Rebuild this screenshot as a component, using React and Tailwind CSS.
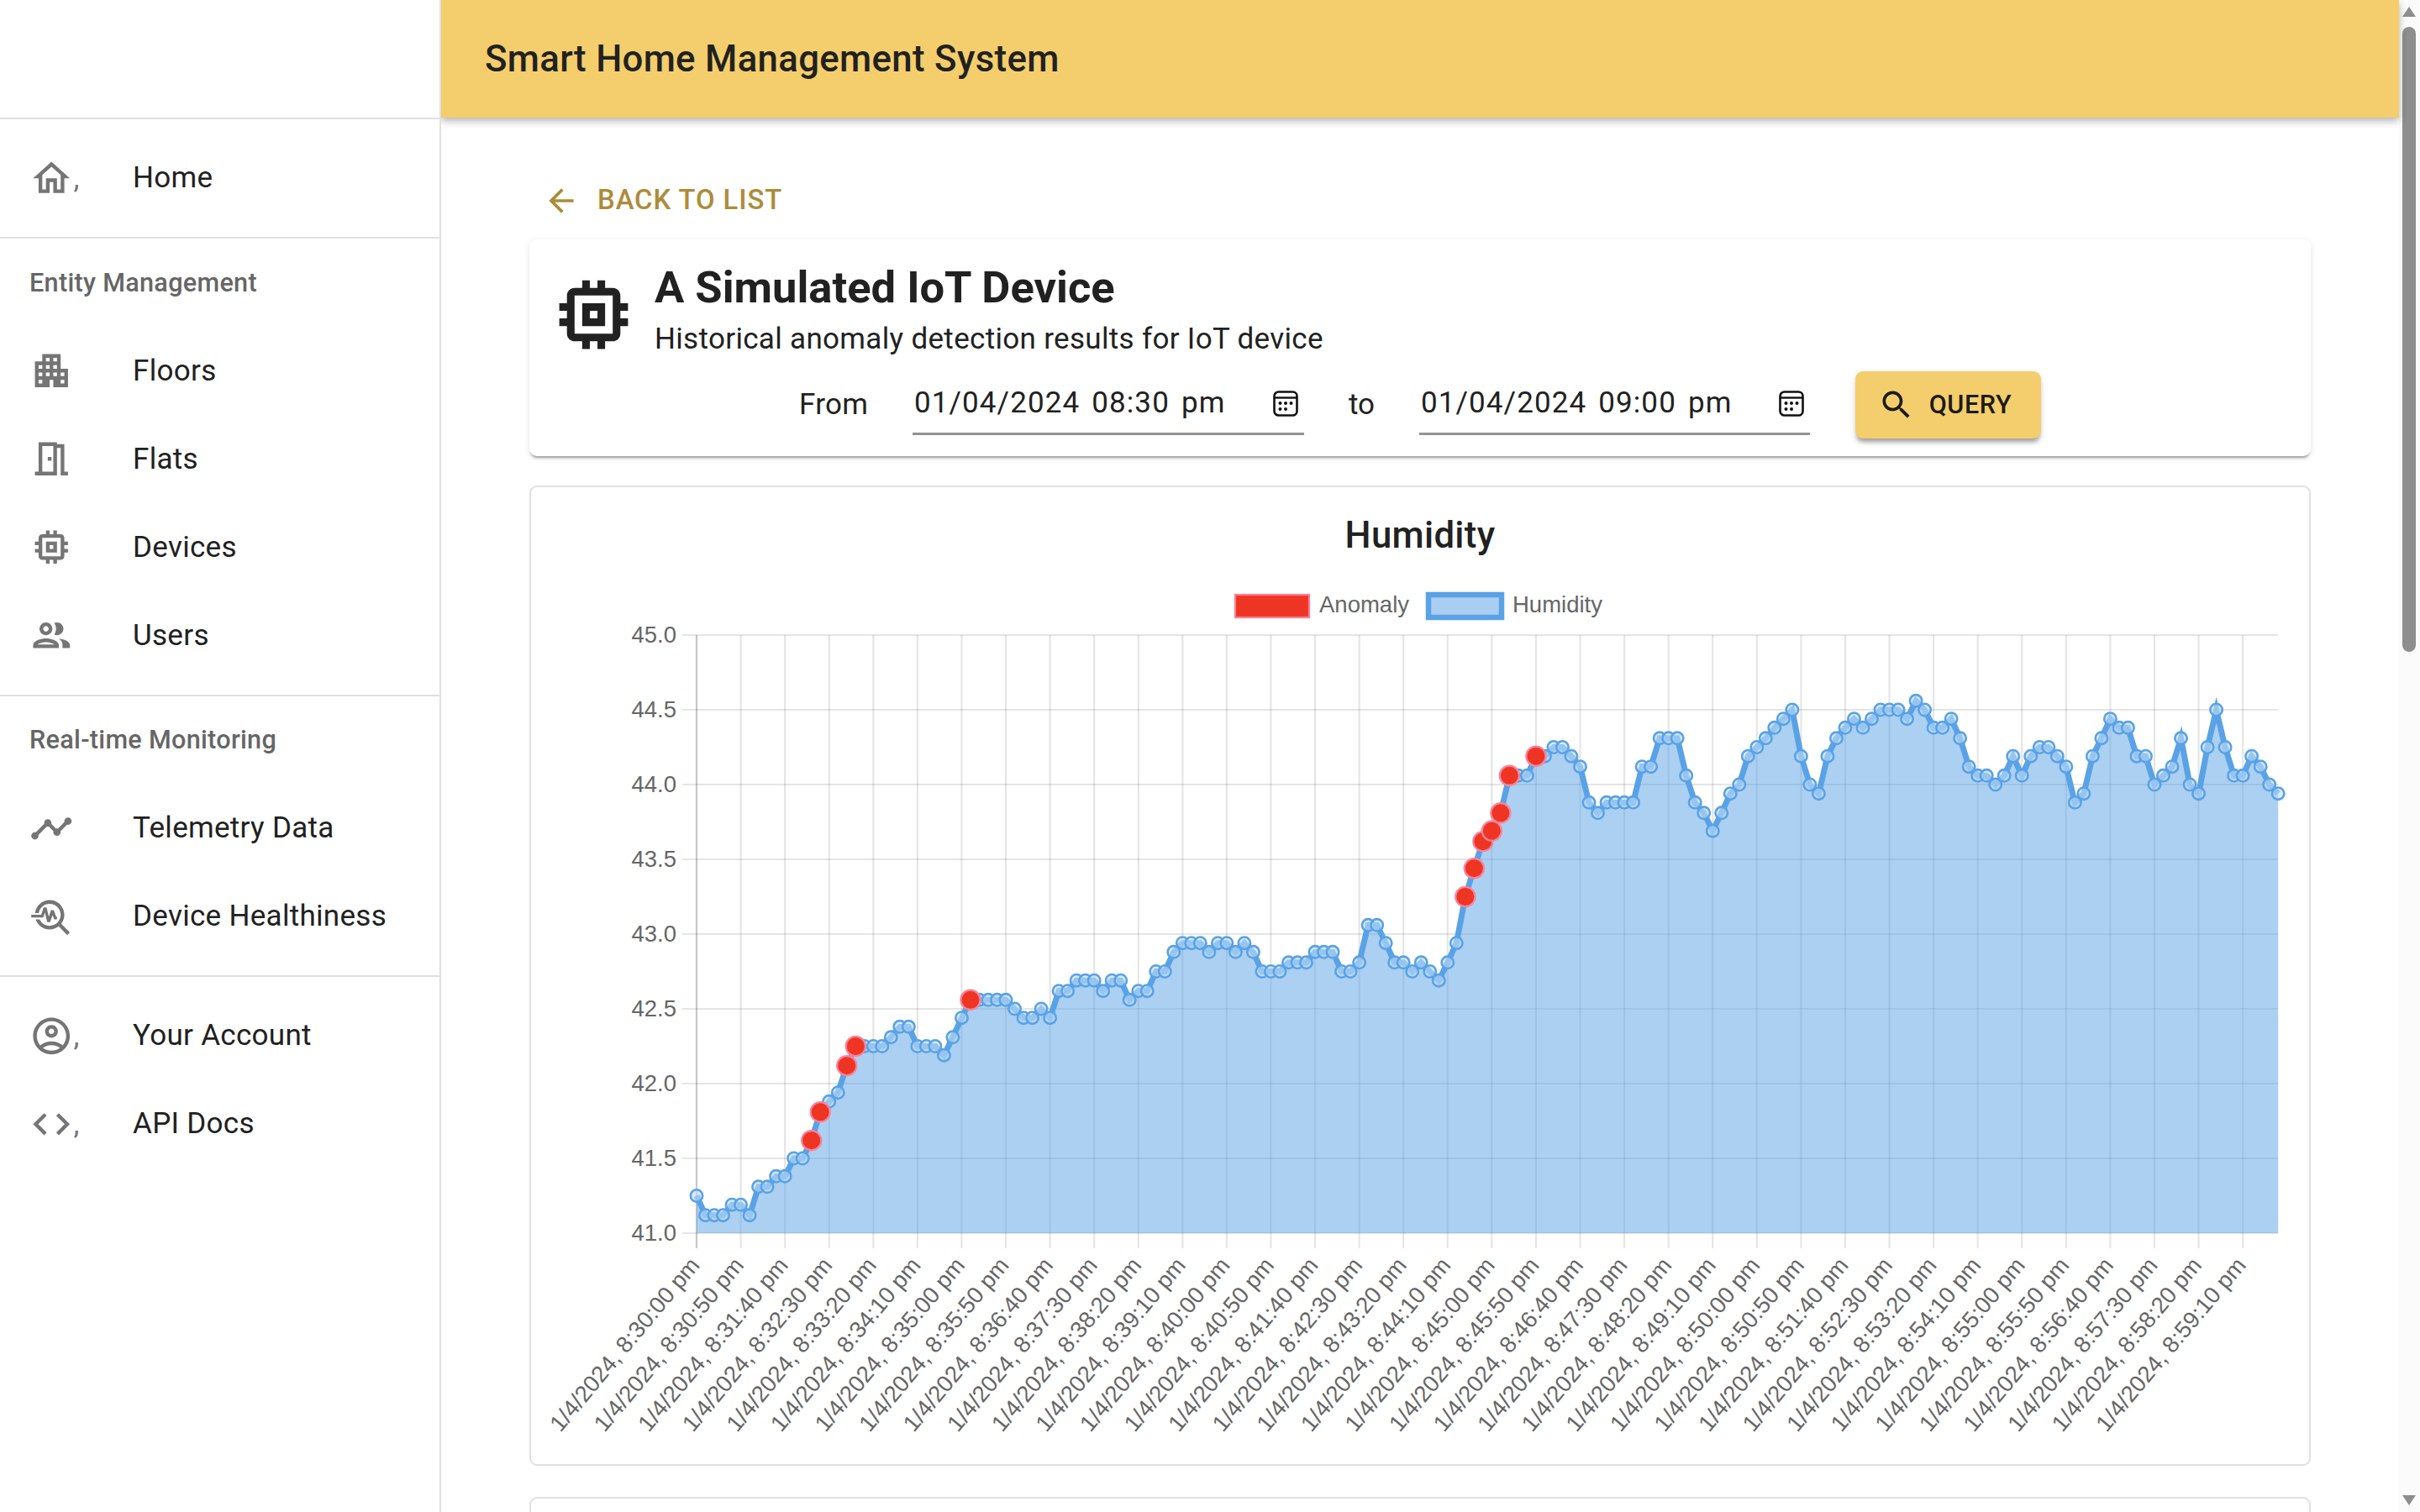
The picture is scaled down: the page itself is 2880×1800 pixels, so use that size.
import React from 'react'

const ICONS = {
  home: 'M12 5.69l5 4.5V18h-2v-6H9v6H7v-7.81l5-4.5M12 3L2 12h3v8h6v-6h2v6h6v-8h3L12 3z',
  floors:
    'M17 11V3H7v4H3v14h8v-4h2v4h8V11h-4zM7 19H5v-2h2v2zm0-4H5v-2h2v2zm0-4H5V9h2v2zm4 4H9v-2h2v2zm0-4H9V9h2v2zm0-4H9V5h2v2zm4 8h-2v-2h2v2zm0-4h-2V9h2v2zm0-4h-2V5h2v2zm4 12h-2v-2h2v2zm0-4h-2v-2h2v2z',
  flats: 'M19 19V4h-4V3H5v16H3v2h12V6h2v15h4v-2h-2zm-6 0H7V5h6v14zm-3-8h2v2h-2z',
  memory:
    'M15 9H9v6h6V9zm-2 4h-2v-2h2v2zm8-2V9h-2V7c0-1.1-.9-2-2-2h-2V3h-2v2h-2V3H9v2H7c-1.1 0-2 .9-2 2v2H3v2h2v2H3v2h2v2c0 1.1.9 2 2 2h2v2h2v-2h2v2h2v-2h2c1.1 0 2-.9 2-2v-2h2v-2h-2v-2h2zm-4 6H7V7h10v10z',
  users:
    'M9 13.75c-2.34 0-7 1.17-7 3.5V19h14v-1.75c0-2.33-4.66-3.5-7-3.5zM4.34 17c.84-.58 2.87-1.25 4.66-1.25s3.82.67 4.66 1.25H4.34zM9 12c1.93 0 3.5-1.57 3.5-3.5S10.93 5 9 5 5.5 6.57 5.5 8.5 7.07 12 9 12zm0-5c.83 0 1.5.67 1.5 1.5S9.83 10 9 10s-1.5-.67-1.5-1.5S8.17 7 9 7zm7.04 6.81c1.16.84 1.96 1.96 1.96 3.44V19h4v-1.75c0-2.02-3.5-3.17-5.96-3.44zM15 12c1.93 0 3.5-1.57 3.5-3.5S16.93 5 15 5c-.54 0-1.04.13-1.5.35.63.89 1 1.98 1 3.15s-.37 2.26-1 3.15c.46.22.96.35 1.5.35z',
  timeline:
    'M23 8c0 1.1-.9 2-2 2-.18 0-.35-.02-.51-.07l-3.56 3.55c.05.16.07.34.07.52 0 1.1-.9 2-2 2s-2-.9-2-2c0-.18.02-.36.07-.52l-2.55-2.55c-.16.05-.34.07-.52.07s-.36-.02-.52-.07l-4.55 4.56c.05.16.07.33.07.51 0 1.1-.9 2-2 2s-2-.9-2-2 .9-2 2-2c.18 0 .35.02.51.07l4.56-4.55C8.02 9.36 8 9.18 8 9c0-1.1.9-2 2-2s2 .9 2 2c0 .18-.02.36-.07.52l2.55 2.55c.16-.05.34-.07.52-.07s.36.02.52.07l3.55-3.56C19.02 8.35 19 8.18 19 8c0-1.1.9-2 2-2s2 .9 2 2z',
  health:
    'M22 20.59l-4.69-4.69C18.37 14.55 19 12.85 19 11c0-4.42-3.58-8-8-8-4.08 0-7.44 3.05-7.93 7h2.02C5.57 7.17 8.03 5 11 5c3.31 0 6 2.69 6 6s-2.69 6-6 6c-2.42 0-4.5-1.44-5.45-3.5H3.4C4.45 16.69 7.46 19 11 19c1.85 0 3.55-.63 4.9-1.69L20.59 22 22 20.59zM8.43 9.69L9.65 15h1.64l1.26-3.78.95 2.28h1.5v-1.5h-.5l-1.25-3.5h-1.5l-1.2 3.53L9.35 7H7.7l-1.25 4H1v1.5h6.55l.88-2.81z',
  account:
    'M12 2C6.48 2 2 6.48 2 12s4.48 10 10 10 10-4.48 10-10S17.52 2 12 2zM7.35 18.5C8.66 17.56 10.26 17 12 17s3.34.56 4.65 1.5c-1.31.94-2.91 1.5-4.65 1.5s-3.34-.56-4.65-1.5zm10.79-1.38C16.45 15.8 14.32 15 12 15s-4.45.8-6.14 2.12C4.7 15.73 4 13.95 4 12c0-4.42 3.58-8 8-8s8 3.58 8 8c0 1.95-.7 3.73-1.86 5.12zM12 6c-1.93 0-3.5 1.57-3.5 3.5S10.07 13 12 13s3.5-1.57 3.5-3.5S13.93 6 12 6zm0 5c-.83 0-1.5-.67-1.5-1.5S11.17 8 12 8s1.5.67 1.5 1.5S12.83 11 12 11z',
  code: 'M9.4 16.6L4.8 12l4.6-4.6L8 6l-6 6 6 6 1.4-1.4zm5.2 0l4.6-4.6-4.6-4.6L16 6l6 6-6 6-1.4-1.4z',
  back: 'M20 11H7.83l5.59-5.59L12 4l-8 8 8 8 1.41-1.41L7.83 13H20v-2z',
  search:
    'M15.5 14h-.79l-.28-.27C15.41 12.59 16 11.11 16 9.5 16 5.91 13.09 3 9.5 3S3 5.91 3 9.5 5.91 16 9.5 16c1.61 0 3.09-.59 4.23-1.57l.27.28v.79l5 4.99L20.49 19l-4.99-5zm-6 0C7.01 14 5 11.99 5 9.5S7.01 5 9.5 5 14 7.01 14 9.5 11.99 14 9.5 14z'
}

const HUMIDITY = [
  41.25, 41.12, 41.12, 41.12, 41.19, 41.19, 41.12, 41.31, 41.31, 41.38, 41.38, 41.5, 41.5, 41.62, 41.81, 41.88, 41.94,
  42.12, 42.25, 42.25, 42.25, 42.25, 42.31, 42.38, 42.38, 42.25, 42.25, 42.25, 42.19, 42.31, 42.44, 42.56, 42.56, 42.56,
  42.56, 42.56, 42.5, 42.44, 42.44, 42.5, 42.44, 42.62, 42.62, 42.69, 42.69, 42.69, 42.62, 42.69, 42.69, 42.56, 42.62,
  42.62, 42.75, 42.75, 42.88, 42.94, 42.94, 42.94, 42.88, 42.94, 42.94, 42.88, 42.94, 42.88, 42.75, 42.75, 42.75, 42.81,
  42.81, 42.81, 42.88, 42.88, 42.88, 42.75, 42.75, 42.81, 43.06, 43.06, 42.94, 42.81, 42.81, 42.75, 42.81, 42.75, 42.69,
  42.81, 42.94, 43.25, 43.44, 43.62, 43.69, 43.81, 44.06, 44.06, 44.06, 44.19, 44.19, 44.25, 44.25, 44.19, 44.12, 43.88,
  43.81, 43.88, 43.88, 43.88, 43.88, 44.12, 44.12, 44.31, 44.31, 44.31, 44.06, 43.88, 43.81, 43.69, 43.81, 43.94, 44.0,
  44.19, 44.25, 44.31, 44.38, 44.44, 44.5, 44.19, 44.0, 43.94, 44.19, 44.31, 44.38, 44.44, 44.38, 44.44, 44.5, 44.5,
  44.5, 44.44, 44.56, 44.5, 44.38, 44.38, 44.44, 44.31, 44.12, 44.06, 44.06, 44.0, 44.06, 44.19, 44.06, 44.19, 44.25,
  44.25, 44.19, 44.12, 43.88, 43.94, 44.19, 44.31, 44.44, 44.38, 44.38, 44.19, 44.19, 44.0, 44.06, 44.12, 44.31, 44.0,
  43.94, 44.25, 44.5, 44.25, 44.06, 44.06, 44.19, 44.12, 44.0, 43.94
]
const ANOMALIES = [13, 14, 17, 18, 31, 87, 88, 89, 90, 91, 92, 95]

const chartX = (i) => 829 + i * 10.515
const chartY = (v) => 1468 - (v - 41) * 178

function tickLabel(i) {
  const total = 30 * 60 + i * 10
  const m = Math.floor(total / 60)
  const s = total % 60
  return `1/4/2024, 8:${String(m).padStart(2, '0')}:${String(s).padStart(2, '0')} pm`
}

function Icon({ name, className }) {
  return (
    <svg viewBox="0 0 24 24" fill="currentColor" className={className}>
      <path d={ICONS[name]} />
    </svg>
  )
}

function NavItem({ icon, label, comma }) {
  return (
    <div className="flex h-[105px] items-center pl-[35px]">
      <div className="flex w-[123px] shrink-0 items-center text-[#757575]">
        <Icon name={icon} className="h-[52.5px] w-[52.5px] shrink-0" />
        {comma && <span className="text-[35px] leading-none">,</span>}
      </div>
      <span className="pt-[1px] text-[35px] tracking-[0.3px] text-[#212121]">{label}</span>
    </div>
  )
}

function SubHeader({ children }) {
  return (
    <div className="flex h-[105px] items-center pl-[35px] text-[30.6px] font-medium tracking-[0.3px] text-[#666666]">
      {children}
    </div>
  )
}

function Sidebar() {
  return (
    <aside className="relative z-20 h-full w-[525px] shrink-0 border-r-2 border-[#e0e0e0] bg-white">
      <div className="h-[142px] border-b-2 border-[#e0e0e0]" />
      <div className="border-b-2 border-[#e0e0e0] py-[17.5px]">
        <NavItem icon="home" label="Home" comma />
      </div>
      <div className="border-b-2 border-[#e0e0e0] pb-[17.5px]">
        <SubHeader>Entity Management</SubHeader>
        <NavItem icon="floors" label="Floors" />
        <NavItem icon="flats" label="Flats" />
        <NavItem icon="memory" label="Devices" />
        <NavItem icon="users" label="Users" />
      </div>
      <div className="border-b-2 border-[#e0e0e0] pb-[17.5px]">
        <SubHeader>Real-time Monitoring</SubHeader>
        <NavItem icon="timeline" label="Telemetry Data" />
        <NavItem icon="health" label="Device Healthiness" />
      </div>
      <div className="py-[17.5px]">
        <NavItem icon="account" label="Your Account" comma />
        <NavItem icon="code" label="API Docs" comma />
      </div>
    </aside>
  )
}

function CalendarGlyph() {
  return (
    <svg viewBox="0 0 30 31" className="h-[31px] w-[30px] shrink-0">
      <rect x="1.5" y="1.5" width="27" height="28" rx="5" fill="none" stroke="#111" strokeWidth="2.6" />
      <path d="M1.5 8.5h27" stroke="#111" strokeWidth="2.4" />
      <circle cx="8.5" cy="15" r="2" fill="#111" />
      <circle cx="15" cy="15" r="2" fill="#111" />
      <circle cx="21.5" cy="15" r="2" fill="#111" />
      <circle cx="8.5" cy="22" r="2" fill="#111" />
      <circle cx="15" cy="22" r="2" fill="#111" />
    </svg>
  )
}

function DateField({ date, time, className }) {
  return (
    <div
      className={`flex h-[76px] items-center justify-between self-start border-b-[3px] border-[#949494] pt-[4px] pl-[2px] pr-[7px] ${className}`}
    >
      <span className="flex gap-[14px] text-[35px] tracking-[1.1px] whitespace-nowrap text-[#212121]">
        <span>{date}</span>
        <span>{time}</span>
        <span>pm</span>
      </span>
      <CalendarGlyph />
    </div>
  )
}

function QueryCard() {
  return (
    <section className="mt-[7px] h-[258px] rounded-[9px] bg-white pt-[27px] shadow-[0_4px_3px_-2px_rgba(0,0,0,0.35),0_2px_8px_0_rgba(0,0,0,0.1)]">
      <div className="flex items-center pl-[22px]">
        <Icon name="memory" className="mt-[7px] h-[109px] w-[109px] shrink-0 text-[#212121]" />
        <div className="ml-[18px]">
          <h1 className="h-[60px] text-[52.5px] leading-[60px] font-bold text-[#212121]">A Simulated IoT Device</h1>
          <p className="mt-[7px] h-[50px] text-[35px] leading-[50px] tracking-[0.32px] text-[#212121]">
            Historical anomaly detection results for IoT device
          </p>
        </div>
      </div>
      <div className="mt-[13px] flex h-[80px] items-center justify-center">
        <span className="mr-[135px] w-0 text-[35px] tracking-[0.33px] whitespace-nowrap text-[#212121]">From</span>
        <DateField date="01/04/2024" time="08:30" className="w-[466px]" />
        <span className="w-[137px] text-center text-[35px] text-[#212121]">to</span>
        <DateField date="01/04/2024" time="09:00" className="w-[465px]" />
        <button className="ml-[54px] flex h-[80px] w-[221px] items-center justify-center gap-[17px] rounded-[9px] bg-[#f4ce6c] pr-[8px] text-[30.6px] font-medium tracking-[0.6px] text-[#1c1a12] shadow-[0_6px_5px_-2px_rgba(0,0,0,0.3),0_4px_10px_0_rgba(0,0,0,0.12)]">
          <Icon name="search" className="h-[44px] w-[44px]" />
          QUERY
        </button>
      </div>
    </section>
  )
}

function HumidityChart() {
  const yTicks = [45, 44.5, 44, 43.5, 43, 42.5, 42, 41.5, 41]
  const xTicks = []
  for (let i = 0; i < 180; i += 5) xTicks.push(i)
  const line = HUMIDITY.map((v, i) => `${chartX(i).toFixed(1)},${chartY(v).toFixed(1)}`).join(' ')
  const area = `829,1468 ${line} ${chartX(179).toFixed(1)},1468`

  return (
    <svg viewBox="632 695 2116 1048" className="block h-[1048px] w-[2116px]" fontFamily="'Liberation Sans', Arial, sans-serif">
      {/* legend */}
      <rect x="1470" y="708" width="88" height="27" fill="#ee3524" stroke="#fb7f93" strokeWidth="2.2" />
      <text x="1570" y="729" fontSize="27.5" fill="#666">Anomaly</text>
      <rect x="1700" y="708" width="87" height="27" fill="#aacef2" stroke="#5aa2e6" strokeWidth="6.5" />
      <text x="1800" y="729" fontSize="27.5" fill="#666">Humidity</text>

      {/* grid */}
      {yTicks.map((v) => (
        <g key={v}>
          <line x1="812" x2="2711" y1={chartY(v)} y2={chartY(v)} stroke="rgba(0,0,0,0.1)" strokeWidth="2.2" />
          <text x="805" y={chartY(v) + 9} textAnchor="end" fontSize="27.5" fill="#666">
            {v.toFixed(1)}
          </text>
        </g>
      ))}
      {xTicks.map((i) => (
        <g key={i}>
          <line
            x1={chartX(i)}
            x2={chartX(i)}
            y1="756"
            y2="1486"
            stroke={i === 0 ? 'rgba(0,0,0,0.22)' : 'rgba(0,0,0,0.1)'}
            strokeWidth="2.2"
          />
          <text
            transform={`translate(${chartX(i) + 5} 1507) rotate(-50)`}
            textAnchor="end"
            fontSize="27.5"
            fill="#666"
          >
            {tickLabel(i)}
          </text>
        </g>
      ))}

      {/* series */}
      <polygon points={area} fill="rgba(90,162,230,0.5)" />
      <polyline points={line} fill="none" stroke="#5aa2e6" strokeWidth="7" strokeMiterlimit="10" />
      {HUMIDITY.map((v, i) => (
        <circle key={i} cx={chartX(i)} cy={chartY(v)} r="7.2" fill="rgba(190,220,248,0.6)" stroke="#5aa2e6" strokeWidth="2.6" />
      ))}
      {ANOMALIES.map((i) => (
        <circle key={i} cx={chartX(i)} cy={chartY(HUMIDITY[i])} r="11.6" fill="#ee3524" stroke="#f7839a" strokeWidth="2.2" />
      ))}
    </svg>
  )
}

function ScrollBar() {
  return (
    <div className="flex h-full w-[25px] shrink-0 flex-col items-center bg-[#fbfbfb] pr-[1px] pt-[8px]">
      <div className="h-0 w-0 border-x-[8px] border-b-[12px] border-x-transparent border-b-[#8e8e8e]" />
      <div className="mt-[12px] h-[744px] w-[16px] rounded-full bg-[#8e8e8e]" />
      <div className="mt-auto mb-[8px] h-0 w-0 border-x-[8px] border-t-[12px] border-x-transparent border-t-[#8e8e8e]" />
    </div>
  )
}

export default function App() {
  return (
    <div className="flex h-[1800px] w-[2880px] overflow-hidden bg-white font-['Roboto',sans-serif]">
      <Sidebar />
      <div className="flex h-full min-w-0 flex-1 flex-col">
        <header className="relative z-10 flex h-[140px] shrink-0 items-center bg-[#f4ce6c] pt-[2px] pl-[52px] text-[43.75px] font-medium tracking-[0.33px] text-[#212121] shadow-[0_4px_9px_0_rgba(0,0,0,0.3)]">
          Smart Home Management System
        </header>
        <main className="min-h-0 flex-1 overflow-hidden px-[105px] pt-[58px]">
          <a className="flex h-[80px] items-center pl-[16px] pt-[1px] text-[32.8px] font-medium tracking-[0.94px] text-[#ad8c38]">
            <Icon name="back" className="mr-[21px] h-[44px] w-[44px]" />
            BACK TO LIST
          </a>
          <QueryCard />
          <section className="mt-[35px] h-[1167px] rounded-[9px] border-2 border-[#e0e0e0] bg-white">
            <h2 className="flex h-[115px] items-center justify-center pt-[1px] text-[43.75px] font-medium tracking-[0.3px] text-[#212121]">
              Humidity
            </h2>
            <HumidityChart />
          </section>
          <section className="mt-[37px] h-[120px] rounded-[9px] border-2 border-[#e0e0e0] bg-white" />
        </main>
      </div>
      <ScrollBar />
    </div>
  )
}
